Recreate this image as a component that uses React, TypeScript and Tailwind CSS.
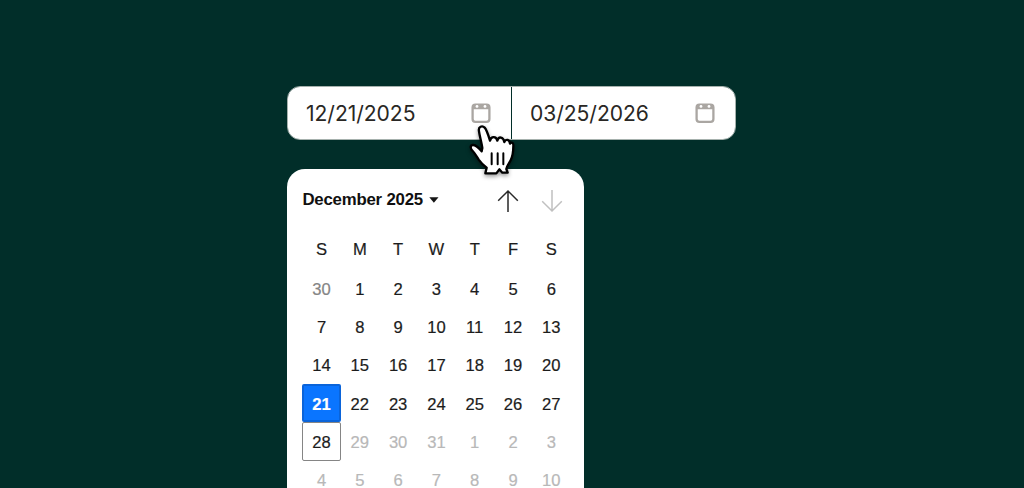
const WEEKDAYS = ["S", "M", "T", "W", "T", "F", "S"];

type Tone = "previous" | "current" | "next" | "selected" | "today";

const TONES: Record<Tone, string> = {
  previous: "text-[#858585]",
  current: "text-[#1c1c1c]",
  next: "text-[#b8b8b8]",
  selected: "rounded-[2px] border-2 border-[#0a64da] bg-[#0a75ff] font-bold text-white",
  today: "rounded-[2px] border border-[#858585] text-[#1c1c1c]",
};

const DAYS: { day: number; tone: Tone }[] = Array.from({ length: 42 }, (_, i) => {
  if (i === 0) return { day: 30, tone: "previous" };
  if (i > 31) return { day: i - 31, tone: "next" };
  if (i === 21) return { day: 21, tone: "selected" };
  if (i === 28) return { day: 28, tone: "today" };
  return { day: i, tone: i > 28 ? "next" : "current" };
});

function CalendarIcon() {
  return (
    <svg width="20" height="21" viewBox="0 0 20 21" fill="none">
      <rect x="1.6" y="1.6" width="16.8" height="17.3" rx="2.8" stroke="#aaa6a2" strokeWidth="2.3" />
      <path d="M1.3 6.3V4A2.8 2.8 0 0 1 4.1 1.2h11.8A2.8 2.8 0 0 1 18.7 4v2.3Z" fill="#aaa6a2" />
      <circle cx="6" cy="3.4" r="1.4" fill="white" />
      <circle cx="14" cy="3.4" r="1.4" fill="white" />
    </svg>
  );
}

function DateField({ value, className }: { value: string; className: string }) {
  return (
    <div className={`flex w-[223px] shrink-0 items-center justify-between bg-white ${className}`}>
      <span className="pt-px font-['Inter',sans-serif] text-[21.1px] leading-7 tracking-[-0.05px] text-[#292724]">
        {value}
      </span>
      <CalendarIcon />
    </div>
  );
}

function Arrow({ down = false }: { down?: boolean }) {
  return (
    <svg width="22" height="24" viewBox="0 0 22 24" fill="none" stroke={down ? "#c0c0c0" : "#292929"} strokeWidth="1.5">
      <path d={down ? "M11 1v21M1.2 12.2 11 22l9.8-9.8" : "M11 23V2M1.2 11.8 11 2l9.8 9.8"} />
    </svg>
  );
}

function HandCursor() {
  return (
    <svg
      className="absolute top-[95px] left-[465px] drop-shadow-[0_2px_2px_rgba(0,0,0,0.4)]"
      width="56"
      height="84"
      viewBox="0 0 168 252"
      fill="none"
      stroke="black"
      strokeLinecap="round"
      strokeLinejoin="round"
    >
      <path
        d="M42 109C39 94 52 91 59 98C65 104 70 121 75 137C78 124 93 122 97 137C101 123 115 125 118 141C123 130 134 134 135 146C141 139 146 144 145 154C145 168 144 182 137 196C131 208 126 212 124 222L128 233H112L103 223L94 235H61L65 218C56 212 48 204 41 194C35 185 29 174 23 168C14 159 16 149 25 150C34 151 43 160 50 169L52 159C50 143 44 124 42 109Z"
        fill="white"
        strokeWidth="7"
      />
      <path d="M80 175V208M98 175V208M115 175V208" strokeWidth="6" />
    </svg>
  );
}

export default function App() {
  return (
    <main className="relative flex h-[488px] w-[1024px] flex-col overflow-hidden bg-[#012e29] pt-[86px] pl-[287px] font-['Liberation_Sans',Arial,sans-serif]">
      <div className="flex h-[54px] w-[449px] shrink-0 gap-px overflow-hidden rounded-[13px] border border-[#a6b1ad] bg-[#012e29]">
        <DateField value="12/21/2025" className="pr-[20.5px] pl-[18px]" />
        <DateField value="03/25/2026" className="pr-[20px] pl-[18px]" />
      </div>

      <section className="mt-[29px] h-[350px] w-[297.4px] shrink-0 rounded-t-[18px] bg-white px-[15.4px] pt-[18px]">
        <header className="flex h-6 items-center justify-between pr-[6.5px]">
          <button className="flex items-center gap-[6px] pt-px text-[16.8px] leading-6 font-bold tracking-[-0.2px] text-[#101010]">
            December 2025
            <svg width="10" height="6" viewBox="0 0 10 6" fill="#151515">
              <path d="M.3.2h9.2L4.9 5.7Z" />
            </svg>
          </button>
          <div className="flex gap-[22px] pt-[3px]">
            <Arrow />
            <Arrow down />
          </div>
        </header>
        <div className="mt-[20px] grid w-[268.1px] grid-cols-7 text-center text-[16.6px] leading-[38.3px] text-[#1c1c1c] [-webkit-text-stroke:0.2px]">
          {WEEKDAYS.map((name, i) => (
            <span key={i}>{name}</span>
          ))}
        </div>
        <div className="grid w-[268.1px] auto-rows-[38.3px] grid-cols-7 text-[16.6px] leading-[12px] [-webkit-text-stroke:0.2px]">
          {DAYS.map(({ day, tone }, i) => (
            <span key={i} className={`flex items-center justify-center pt-[2.6px] ${TONES[tone]}`}>
              {day}
            </span>
          ))}
        </div>
      </section>

      <HandCursor />
    </main>
  );
}
